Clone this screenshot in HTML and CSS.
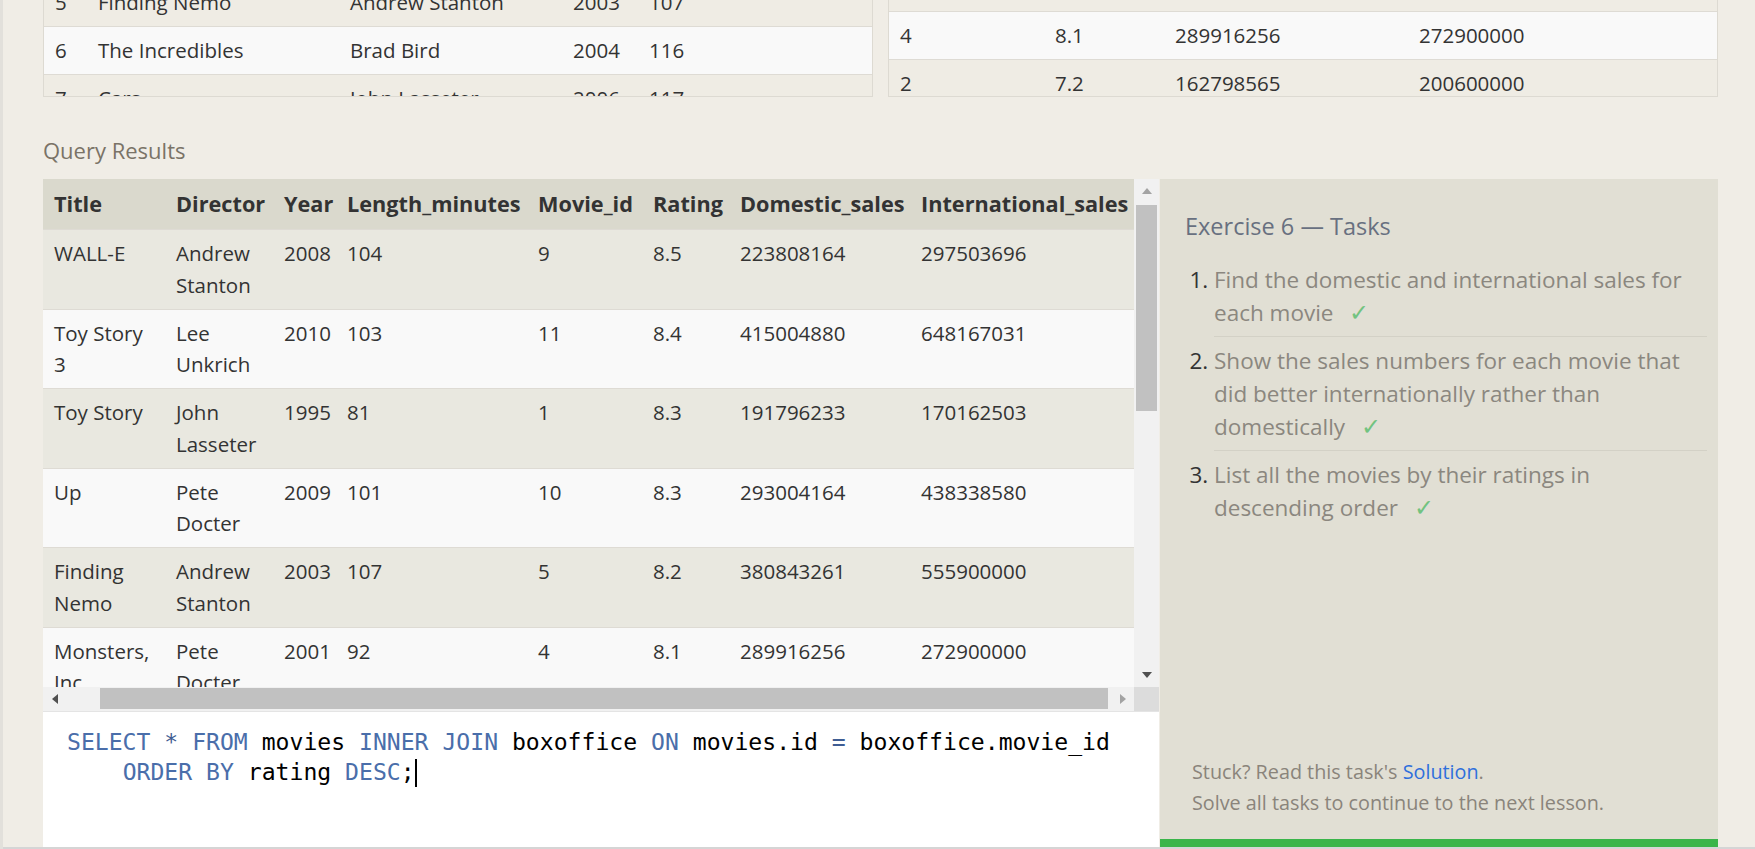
FILE: index.html
```html
<!DOCTYPE html>
<html lang="en">
<head>
<meta charset="utf-8">
<title>SQL Lesson 6 — Exercise</title>
<link rel="stylesheet" href="styles.css">
</head>
<body>
<div class="page">
  <div class="top">
    <div class="panel">
      <div class="clip">
        <table class="mini mini-left">
          <colgroup><col class="c-id"><col class="c-title"><col class="c-dir"><col class="c-year"><col class="c-len"></colgroup>
          <tbody>
            <tr class="odd"><td>5</td><td>Finding Nemo</td><td>Andrew Stanton</td><td>2003</td><td>107</td></tr>
            <tr class="even"><td>6</td><td>The Incredibles</td><td>Brad Bird</td><td>2004</td><td>116</td></tr>
            <tr class="odd"><td>7</td><td>Cars</td><td>John Lasseter</td><td>2006</td><td>117</td></tr>
          </tbody>
        </table>
      </div>
    </div>
    <div class="panel">
      <div class="clip">
        <table class="mini mini-right">
          <colgroup><col class="r-id"><col class="r-rating"><col class="r-dom"><col class="r-int"></colgroup>
          <tbody>
            <tr class="odd"><td>5</td><td>8.2</td><td>380843261</td><td>555900000</td></tr>
            <tr class="even"><td>4</td><td>8.1</td><td>289916256</td><td>272900000</td></tr>
            <tr class="odd"><td>2</td><td>7.2</td><td>162798565</td><td>200600000</td></tr>
          </tbody>
        </table>
      </div>
    </div>
  </div>

  <h2 class="section-title">Query Results</h2>

  <div class="workspace">
    <div class="results">
      <div class="scroller">
        <div class="viewport">
          <table class="res">
            <colgroup>
              <col class="k-title"><col class="k-dir"><col class="k-year"><col class="k-len">
              <col class="k-mid"><col class="k-rat"><col class="k-dom"><col class="k-int">
            </colgroup>
            <thead>
              <tr><th>Title</th><th>Director</th><th>Year</th><th>Length_minutes</th><th>Movie_id</th><th>Rating</th><th>Domestic_sales</th><th>International_sales</th></tr>
            </thead>
            <tbody>
              <tr class="odd"><td>WALL-E</td><td>Andrew Stanton</td><td>2008</td><td>104</td><td>9</td><td>8.5</td><td>223808164</td><td>297503696</td></tr>
              <tr class="even"><td>Toy Story 3</td><td>Lee Unkrich</td><td>2010</td><td>103</td><td>11</td><td>8.4</td><td>415004880</td><td>648167031</td></tr>
              <tr class="odd"><td>Toy Story</td><td>John Lasseter</td><td>1995</td><td>81</td><td>1</td><td>8.3</td><td>191796233</td><td>170162503</td></tr>
              <tr class="even"><td>Up</td><td>Pete Docter</td><td>2009</td><td>101</td><td>10</td><td>8.3</td><td>293004164</td><td>438338580</td></tr>
              <tr class="odd"><td>Finding Nemo</td><td>Andrew Stanton</td><td>2003</td><td>107</td><td>5</td><td>8.2</td><td>380843261</td><td>555900000</td></tr>
              <tr class="even"><td>Monsters, Inc.</td><td>Pete Docter</td><td>2001</td><td>92</td><td>4</td><td>8.1</td><td>289916256</td><td>272900000</td></tr>
              <tr class="odd"><td>Ratatouille</td><td>Brad Bird</td><td>2007</td><td>115</td><td>7</td><td>8.0</td><td>206445654</td><td>417277164</td></tr>
            </tbody>
          </table>
        </div>
        <div class="vbar">
          <div class="btn"><svg width="10" height="6" viewBox="0 0 10 6"><polygon points="0,6 10,6 5,0" class="tri-off"/></svg></div>
          <div class="vtrack"><div class="vthumb"></div></div>
          <div class="btn"><svg width="10" height="6" viewBox="0 0 10 6"><polygon points="0,0 10,0 5,6" class="tri-on"/></svg></div>
        </div>
        <div class="hbar">
          <div class="hbtn"><svg width="6" height="10" viewBox="0 0 6 10"><polygon points="6,0 6,10 0,5" class="tri-on"/></svg></div>
          <div class="htrack"><div class="hthumb"></div></div>
          <div class="hbtn"><svg width="6" height="10" viewBox="0 0 6 10"><polygon points="0,0 0,10 6,5" class="tri-off"/></svg></div>
        </div>
        <div class="corner"></div>
      </div>
      <div class="editor">
<pre class="code"><span class="kw">SELECT</span> <span class="op">*</span> <span class="kw">FROM</span> movies <span class="kw">INNER</span> <span class="kw">JOIN</span> boxoffice <span class="kw">ON</span> movies.id <span class="op">=</span> boxoffice.movie_id
    <span class="kw">ORDER</span> <span class="kw">BY</span> rating <span class="kw">DESC</span>;<span class="cursor"></span></pre>
      </div>
    </div>

    <aside class="tasks">
      <h3 class="tasks-title">Exercise 6 — Tasks</h3>
      <ol class="task-list">
        <li>Find the domestic and international sales for each movie <span class="check">✓</span></li>
        <li>Show the sales numbers for each movie that did better internationally rather than domestically <span class="check">✓</span></li>
        <li class="last">List all the movies by their ratings in descending order <span class="check">✓</span></li>
      </ol>
      <div class="tasks-foot">
        <p>Stuck? Read this task's <a class="link" href="#">Solution</a>.</p>
        <p>Solve all tasks to continue to the next lesson.</p>
      </div>
      <div class="progress"></div>
    </aside>
  </div>
</div>
<div class="bottom-line"></div>
</body>
</html>
```

FILE: styles.css
```css
html, body {
  margin: 0;
  padding: 0;
}

body {
  background: #f0ede6;
  font-family: "Open Sans", "Noto Sans", sans-serif;
  color: #333;
  height: 849px;
  overflow: hidden;
  border-left: 3px solid #e2e0db;
  box-sizing: border-box;
}

.page {
  padding-left: 40px;
  width: 1675px;
  height: 847px;
  display: flex;
  flex-direction: column;
}

/* top panels */
.top {
  display: grid;
  grid-template-columns: 830px 830px;
  column-gap: 15px;
  height: 97px;
}

.panel {
  border: 1px solid #dddad2;
  border-top: none;
  overflow: hidden;
}

.clip {
  height: 96px;
  overflow: hidden;
}

.mini {
  border-collapse: collapse;
  table-layout: fixed;
  width: 100%;
  font-size: 20.5px;
  line-height: 31.75px;
  color: #333;
}

.mini-left { margin-top: -22px; }
.mini-right { margin-top: -36.5px; }

.mini td {
  padding: 8px 11px 7px 11px;
  border-top: 1px solid #dedbd4;
  white-space: nowrap;
}

.mini .odd { background: #efece4; }
.mini .even { background: #f9f9f9; }

.c-id { width: 43px; }
.c-title { width: 252px; }
.c-dir { width: 223px; }
.c-year { width: 76px; }
.c-len { width: auto; }

.r-id { width: 155px; }
.r-rating { width: 120px; }
.r-dom { width: 244px; }
.r-int { width: auto; }

/* heading */
.section-title {
  margin: 37px 0 13px 0;
  font-size: 22px;
  line-height: 32px;
  font-weight: 400;
  color: #7a7367;
}

/* workspace */
.workspace {
  display: grid;
  grid-template-columns: 1116px 558px;
  column-gap: 1px;
  height: 668px;
}

.results {
  display: flex;
  flex-direction: column;
  background: #fff;
}

.scroller {
  display: grid;
  grid-template-columns: 1091px 25px;
  grid-template-rows: 508px 24px;
  border-bottom: 1px solid #e4e4e4;
}

.viewport {
  overflow: hidden;
  background: #f9f9f9;
}

.res {
  border-collapse: collapse;
  table-layout: fixed;
  width: 1091px;
  font-size: 20.5px;
  line-height: 31.75px;
  color: #333;
}

.res th {
  background: #dad9cd;
  text-align: left;
  font-size: 21.7px;
  font-weight: 700;
  padding: 9px 0 9px 11px;
  line-height: 32px;
  white-space: nowrap;
  color: #333;
}

.res td {
  padding: 8px 11px 7px 11px;
  border-top: 1px solid #dedbd4;
  vertical-align: top;
}

.res .odd { background: #e9e8e0; }
.res .even { background: #f9f9f9; }

.k-title { width: 122px; }
.k-dir { width: 108px; }
.k-year { width: 63px; }
.k-len { width: 191px; }
.k-mid { width: 115px; }
.k-rat { width: 87px; }
.k-dom { width: 181px; }
.k-int { width: 224px; }

/* fake scrollbars */
.vbar {
  background: #f1f1f1;
  display: flex;
  flex-direction: column;
}

.btn {
  height: 24px;
  display: flex;
  align-items: center;
  justify-content: center;
}

.vtrack {
  flex: 1;
  padding: 2px 2px 0 2px;
}

.vthumb {
  height: 206px;
  background: #c1c1c1;
}

.hbar {
  background: #f1f1f1;
  display: flex;
}

.hbtn {
  width: 23px;
  display: flex;
  align-items: center;
  justify-content: center;
}

.htrack {
  flex: 1;
  padding: 1px 3px 2px 34px;
  display: flex;
}

.hthumb {
  flex: 1;
  background: #c1c1c1;
}

.corner {
  background: #dcdcdc;
}

.tri-on { fill: #505050; }
.tri-off { fill: #a3a3a3; }

/* editor */
.editor {
  flex: 1;
  background: #fff;
  padding: 15px 0 0 24px;
}

.code {
  margin: 0;
  font-family: "DejaVu Sans Mono", "Liberation Mono", monospace;
  font-size: 23.1px;
  line-height: 30px;
  color: #000;
}

.kw { color: #4a6eaa; }
.op { color: #3f5d93; }

.cursor {
  display: inline-block;
  width: 2px;
  height: 28px;
  background: #000;
  vertical-align: -7px;
}

/* tasks panel */
.tasks {
  background: #e1dfd4;
  display: flex;
  flex-direction: column;
  padding: 0;
}

.tasks-title {
  margin: 30px 0 0 25px;
  font-size: 23.5px;
  line-height: 34px;
  font-weight: 400;
  color: #687080;
}

.task-list {
  margin: 20px 11px 0 54px;
  padding: 0;
  font-size: 22.5px;
  line-height: 33px;
  color: #8b877f;
}

.task-list li {
  padding: 0 0 6px 0;
  margin-bottom: 7px;
  border-bottom: 1px solid #d3d1c6;
}

.task-list li::marker {
  color: #333;
}

.task-list li.last {
  border-bottom: none;
}

.check {
  color: #72c380;
  margin-left: 10px;
  font-family: "DejaVu Sans", sans-serif;
  font-size: 24px;
  font-weight: 300;
}

.tasks-foot {
  margin-top: auto;
  padding: 0 0 21px 32px;
  font-size: 19.8px;
  line-height: 30.5px;
  color: #8a847b;
}

.tasks-foot p {
  margin: 0;
}

.link {
  color: #2f6fdc;
  text-decoration: none;
}

.progress {
  height: 8px;
  background: #3ab54a;
}

.bottom-line {
  height: 2px;
  background: #d5d5d5;
}
```
